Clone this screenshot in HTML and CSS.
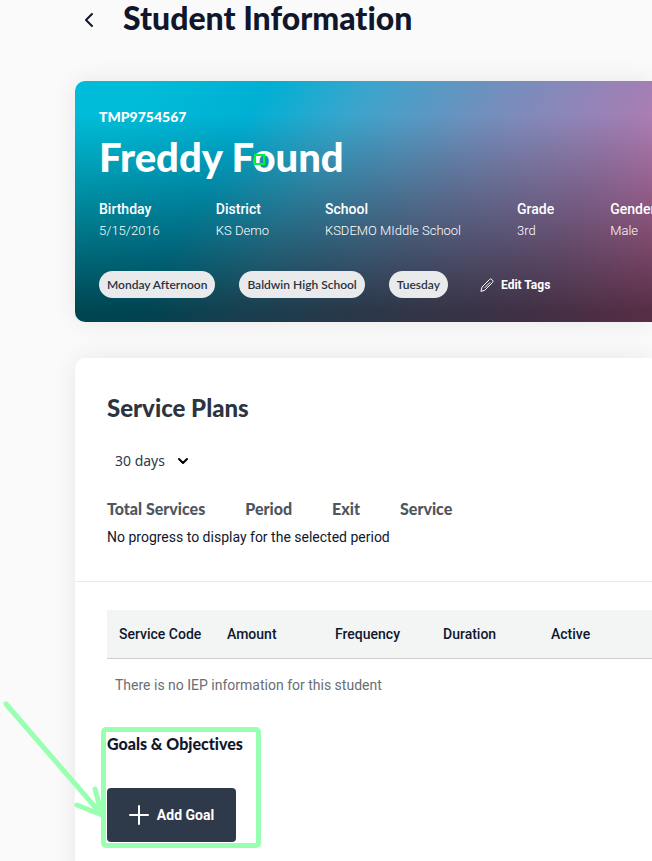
FILE: index.html
```html
<!DOCTYPE html>
<html lang="en">
<head>
  <meta charset="UTF-8">
  <meta name="viewport" content="width=device-width, initial-scale=1">
  <title>Student Information</title>
  <link rel="stylesheet" href="styles.css">
</head>
<body>

  <main class="page">

    <header class="page-header">
      <button class="back-btn" type="button" aria-label="Back">
        <svg width="12" height="16" viewBox="0 0 12 16"><path d="M9 2 3 8l6 6"/></svg>
      </button>
      <h1>Student Information</h1>
    </header>

    <!-- Student banner -->
    <section class="banner">
      <div class="student-id">TMP9754567</div>
      <h2 class="student-name">Freddy Found</h2>

      <dl class="details">
        <div><dt>Birthday</dt><dd>5/15/2016</dd></div>
        <div><dt>District</dt><dd>KS Demo</dd></div>
        <div><dt>School</dt><dd>KSDEMO MIddle School</dd></div>
        <div><dt>Grade</dt><dd>3rd</dd></div>
        <div><dt>Gender</dt><dd>Male</dd></div>
      </dl>

      <div class="tags">
        <span class="tag">Monday Afternoon</span>
        <span class="tag">Baldwin High School</span>
        <span class="tag">Tuesday</span>
        <button class="edit-tags" type="button">
          <svg width="14" height="14" viewBox="0 0 14 14"><path d="M1 13l1-4 7.500-7.500a1.700 1.700 0 0 1 2.400 0l.6.6a1.700 1.700 0 0 1 0 2.400L5 12zM5 9.500l5-5"/></svg>
          Edit Tags
        </button>
      </div>
    </section>

    <!-- Service plans -->
    <section class="card">
      <div class="plans">
        <h2>Service Plans</h2>
        <div class="period">
          <select aria-label="Period">
            <option>30 days</option>
            <option>60 days</option>
            <option>90 days</option>
          </select>
          <svg class="chevron" width="12" height="8" viewBox="0 0 12 8"><path d="M2 2l4 4 4-4"/></svg>
        </div>
        <div class="progress-head">
          <span>Total Services</span>
          <span>Period</span>
          <span>Exit</span>
          <span>Service</span>
        </div>
        <p class="no-progress">No progress to display for the selected period</p>
      </div>

      <div class="iep">
        <table>
          <thead>
            <tr>
              <th>Service Code</th>
              <th>Amount</th>
              <th>Frequency</th>
              <th>Duration</th>
              <th>Active</th>
            </tr>
          </thead>
          <tbody>
            <tr>
              <td colspan="5">There is no IEP information for this student</td>
            </tr>
          </tbody>
        </table>

        <div class="goals">
          <h3>Goals &amp; Objectives</h3>
          <button class="add-goal" type="button">
            <svg width="20" height="20" viewBox="0 0 20 20"><path d="M10 1v18M1 10h18"/></svg>
            Add Goal
          </button>
          <div class="highlight"></div>
          <svg class="arrow" width="104" height="120" viewBox="0 0 104 120"><path d="M6 4 102 115M77 105l25 10-7-26"/></svg>
        </div>
      </div>
    </section>

    <span class="marker"></span>

  </main>

</body>
</html>
```
FILE: styles.css
```css
* {
  box-sizing: border-box;
}

body {
  margin: 0;
  background: #fafafa;
  color: #10172d;
  font-family: Roboto, "Liberation Sans", sans-serif;
  font-size: 14px;
  font-variant-ligatures: none;
  line-height: 22px;
}

h1, h2, h3, p, dl, dd {
  margin: 0;
}

button, select {
  border: none;
  background: none;
  padding: 0;
  font-family: inherit;
  cursor: pointer;
}

svg {
  fill: none;
  stroke: currentColor;
  stroke-width: 2;
  stroke-linecap: round;
  stroke-linejoin: round;
}

.page {
  position: relative;
  min-height: 100vh;
  padding-left: 75px;
  overflow: hidden;
}

/* Header */
.page-header {
  display: flex;
  align-items: center;
  gap: 28px;
  height: 40px;
  padding-left: 8px;
  margin-bottom: 41px;
}
.page-header h1 {
  font-family: Lato, sans-serif;
  font-size: 32px;
  font-weight: 900;
  line-height: 36px;
  padding-bottom: 4px;
}
.back-btn {
  display: flex;
  width: 12px;
  color: #10172d;
}

/* Student banner */
.banner {
  padding: 24px;
  border-radius: 10px 0 0 10px;
  color: #fff;
  background:
    linear-gradient(to bottom, rgba(0, 0, 0, 0) 14%, rgba(0, 0, 0, 0.62) 96%),
    linear-gradient(120deg, #00bcd8 10%, #00b0d4 27%, #3aa5cc 41%, #738fbd 60%, #a47eb4 81%, #e577b2 100%);
  box-shadow: 0 0 24px rgba(0, 0, 0, 0.08);
}
.student-id {
  font-family: Lato, sans-serif;
  font-weight: 900;
  line-height: 24px;
}
.student-name {
  font-family: Lato, sans-serif;
  font-size: 40px;
  font-weight: 900;
  line-height: 56px;
}
.details {
  display: flex;
  gap: 56px;
  margin-top: 13px;
  white-space: nowrap;
}
.details dt {
  font-weight: 500;
}
.details dd {
  font-size: 13px;
  font-weight: 300;
}
.tags {
  display: flex;
  align-items: center;
  gap: 24px;
  margin-top: 29px;
}
.tag {
  padding: 0 8px;
  border-radius: 14px;
  background: #e9eaec;
  color: #2b323e;
  font-family: Lato, sans-serif;
  font-size: 12px;
  font-weight: 600;
  line-height: 27px;
}
.edit-tags {
  display: flex;
  align-items: center;
  gap: 7px;
  padding-left: 8px;
  color: #fff;
  font-size: 12px;
  font-weight: 700;
}
.edit-tags svg {
  stroke-width: 1;
}

/* Service plans */
.card {
  margin-top: 36px;
  padding-bottom: 40px;
  border-radius: 10px 0 0 0;
  background: #fff;
  box-shadow: 0 0 24px rgba(0, 0, 0, 0.08);
}
.plans {
  padding: 32px 32px 33px;
  border-bottom: 1px solid #e8eaea;
}
.plans h2 {
  color: #2c343e;
  font-family: Lato, sans-serif;
  font-size: 24px;
  font-weight: 900;
  line-height: 36px;
}
.period {
  display: flex;
  align-items: center;
  margin-top: 20px;
  padding-left: 8px;
}
.period select {
  appearance: none;
  width: 80px;
  height: 28px;
  color: #2e3949;
  font-family: "Noto Sans", sans-serif;
  font-size: 14px;
}
.chevron {
  margin: 2px 0 0 -18px;
  color: #000;
  pointer-events: none;
}
.progress-head {
  display: flex;
  gap: 40px;
  margin-top: 24px;
  color: #50565e;
  font-family: Lato, sans-serif;
  font-size: 16px;
  font-weight: 900;
}
.no-progress {
  margin-top: 6px;
}

/* IEP table */
.iep {
  padding: 28px 0 0 32px;
}
.iep table {
  width: 100%;
  border-collapse: collapse;
  table-layout: fixed;
}
.iep th {
  width: 108px;
  height: 48px;
  padding: 0 12px;
  border-bottom: 1px solid #cbcfcf;
  background: #f3f5f4;
  font-weight: 500;
  text-align: left;
  white-space: nowrap;
}
.iep th:last-child {
  width: auto;
}
.iep td {
  padding: 15px 8px;
  color: #6a6e73;
}

/* Goals */
.goals {
  position: relative;
  margin-top: 21px;
}
.goals h3 {
  font-family: Lato, sans-serif;
  font-size: 16px;
  font-weight: 900;
  line-height: 24px;
}
.add-goal {
  display: flex;
  align-items: center;
  justify-content: center;
  gap: 8px;
  width: 129px;
  height: 54px;
  margin-top: 32px;
  border-radius: 4px;
  background: #2e3949;
  color: #fff;
  font-size: 14px;
  font-weight: 700;
}

/* Annotations over the page */
.highlight {
  position: absolute;
  top: -5px;
  left: -6px;
  width: 160px;
  height: 121px;
  border: 5px solid #99ffb1;
  border-radius: 5px;
}
.arrow {
  position: absolute;
  top: -32px;
  left: -107px;
  color: #99ffb1;
  stroke-width: 5;
}
.marker {
  position: absolute;
  top: 154px;
  left: 254px;
  width: 11px;
  height: 11px;
  border: 2px solid #00f03c;
}
```
